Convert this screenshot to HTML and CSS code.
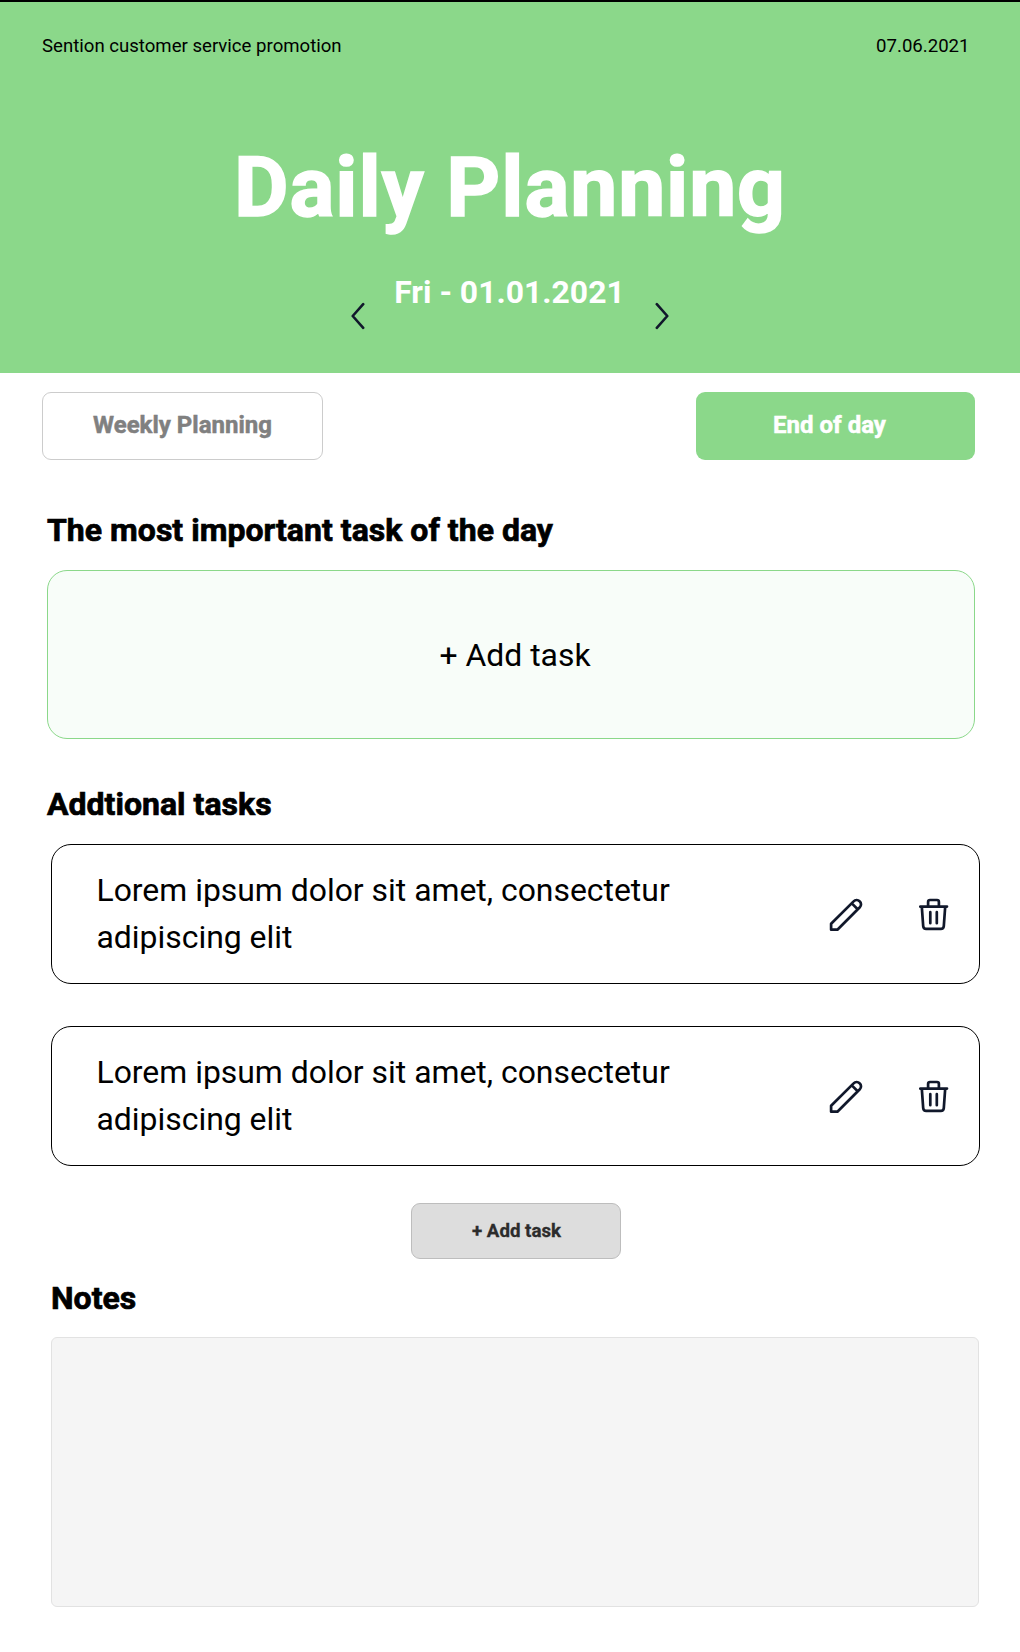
FILE: index.html
```html
<!DOCTYPE html>
<html lang="en">
<head>
<meta charset="utf-8">
<title>Daily Planning</title>
<link rel="stylesheet" href="styles.css">
</head>
<body>
<svg class="sprite" aria-hidden="true">
  <symbol id="pencil" viewBox="0 0 34 34">
    <path d="M2.1 31.7V25.7L24.6 3.4C26.2 1.7 28.9 1.6 30.6 3.2C32.5 4.9 32.4 7.6 30.8 9.3L8.4 31.7ZM22.8 5.4L28.7 11.2"/>
  </symbol>
  <symbol id="trash" viewBox="0 0 30 33">
    <path d="M1.3 8.6H28M2.8 8.6L4.2 28.1C4.4 30 5.5 30.9 7.1 30.9H21.9C23.5 30.9 24.6 30 24.8 28.1L26.2 8.6M9.1 8.6V3.9C9.1 2.6 9.7 2 11 2H18C19.3 2 19.9 2.6 19.9 3.9V8.6M11.3 14.2V25.2M17.8 14.2V25.2"/>
  </symbol>
</svg>
<header class="hero">
  <div class="topbar"><span class="project">Sention customer service promotion</span><time class="today">07.06.2021</time></div>
  <h1 class="title">Daily Planning</h1>
  <nav class="day-nav">
    <button class="arrow" aria-label="Previous day"><svg viewBox="0 0 14 28"><path d="M12.2 2.2L1.7 14L12.2 25.8"/></svg></button>
    <span class="day">Fri - 01.01.2021</span>
    <button class="arrow" aria-label="Next day"><svg viewBox="0 0 14 28"><path d="M1.8 2.2L12.3 14L1.8 25.8"/></svg></button>
  </nav>
</header>
<main class="content">
  <div class="actions">
    <button class="btn btn-weekly">Weekly Planning</button>
    <button class="btn btn-end">End of day</button>
  </div>
  <section class="priority">
    <h2 class="heading">The most important task of the day</h2>
    <button class="priority-box">+ Add task</button>
  </section>
  <section class="tasks">
    <h2 class="heading">Addtional tasks</h2>
    <ul class="task-list">
      <li class="task">
        <p class="task-text">Lorem ipsum dolor sit amet, consectetur adipiscing elit</p>
        <svg class="icon icon-pencil"><use href="#pencil"/></svg>
        <svg class="icon icon-trash"><use href="#trash"/></svg>
      </li>
      <li class="task">
        <p class="task-text">Lorem ipsum dolor sit amet, consectetur adipiscing elit</p>
        <svg class="icon icon-pencil"><use href="#pencil"/></svg>
        <svg class="icon icon-trash"><use href="#trash"/></svg>
      </li>
    </ul>
    <button class="add-task">+ Add task</button>
  </section>
  <section class="notes">
    <h2 class="heading">Notes</h2>
    <div class="notes-box"></div>
  </section>
</main>
</body>
</html>
```
FILE: styles.css
```css
* { box-sizing: border-box; }
body { margin: 0; background: #fff; color: #000; font-family: Roboto, sans-serif; }
button { margin: 0; padding: 0; border: 0; background: none; color: inherit; font: inherit; }
h1, h2, p, ul { margin: 0; padding: 0; }
.sprite { display: none; }

.hero { height: 373px; padding-top: 33px; border-top: 2px solid #000; background: #8bd88a; }
.topbar { display: flex; justify-content: space-between; padding: 0 50.5px 0 42px; font-size: 18.6px; line-height: 22px; }
.title { margin-top: 81px; font-size: 84px; line-height: 100px; font-weight: 700; letter-spacing: 0.85px; -webkit-text-stroke: 1.5px #fff; text-align: center; color: #fff; }
.day-nav { display: flex; justify-content: center; align-items: flex-start; gap: 30px; margin-top: 34px; }
.day { margin-left: -1px; font-size: 31.9px; line-height: 40px; font-weight: 700; color: #fff; }
.arrow { width: 14px; height: 28px; margin-top: 30px; }
.arrow svg { display: block; width: 14px; height: 28px; }
.arrow path { fill: none; stroke: #11182b; stroke-width: 2.6; stroke-linecap: round; stroke-linejoin: round; }

.actions { display: flex; justify-content: space-between; padding: 19px 45px 0 42px; }
.btn { height: 68px; border-radius: 9px; font-size: 24px; font-weight: 700; line-height: 66px; -webkit-text-stroke: 0.5px currentColor; }
.btn-weekly { width: 281px; padding: 0 0 2px; border: 1px solid #ccc; color: #808080; line-height: 64px; }
.btn-end { width: 279px; padding: 0 12px 2px 0; background: #8bd88a; color: #fff; }

.heading { font-size: 32px; line-height: 40px; font-weight: 700; letter-spacing: 0.02px; -webkit-text-stroke: 0.7px currentColor; }
.priority { padding: 50px 45px 0 47px; }
.priority-box { display: block; width: 100%; height: 169px; margin-top: 20px; padding: 0 0 0 8px; border: 1.5px solid #8bd88a; border-radius: 20px; background: #f8fdf9; font-size: 31.9px; }

.tasks { padding: 45px 40px 0 47px; }
.task-list { display: grid; gap: 42px; margin: 20px 0 0 4px; list-style: none; }
.task { display: flex; align-items: center; height: 140px; padding: 0 30px 0 44.5px; border: 1.3px solid #000; border-radius: 20px; }
.task-text { width: 620px; margin-right: auto; font-size: 31.9px; line-height: 46.7px; }
.icon { flex: none; fill: none; stroke: #11182b; stroke-width: 2.7; stroke-linecap: round; stroke-linejoin: round; }
.icon-pencil { width: 34px; height: 34px; margin: 1px 56px 0 0; }
.icon-trash { width: 30px; height: 33px; }
.add-task { display: block; width: 210px; height: 56px; margin: 37px 0 0 364px; padding-left: 1px; border: 1px solid #bdbdbd; border-radius: 9px; background: #ddd; color: #2c2c2c; font-size: 18.7px; font-weight: 700; -webkit-text-stroke: 0.3px currentColor; }

.notes { padding: 19px 41px 45px 51px; }
.notes-box { height: 270px; margin-top: 19px; border: 1px solid #e2e2e2; border-radius: 6px; background: #f5f5f5; }
```
